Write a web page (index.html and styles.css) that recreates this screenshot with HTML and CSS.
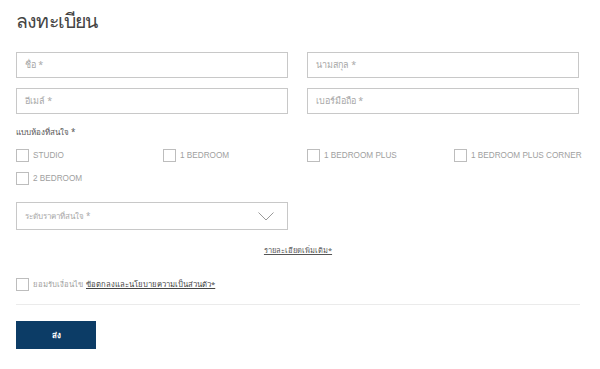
FILE: index.html
```html
<!DOCTYPE html>
<html lang="th">
<head>
<meta charset="utf-8">
<link rel="stylesheet" href="styles.css">
</head>
<body>
<div class="page">
  <h1 class="title">ลงทะเบียน</h1>
  <div class="grid2">
    <div class="field">ชื่อ *</div>
    <div class="field">นามสกุล *</div>
    <div class="field">อีเมล์ *</div>
    <div class="field">เบอร์มือถือ *</div>
  </div>
  <div class="label">แบบห้องที่สนใจ *</div>
  <div class="rooms">
    <div class="opt"><span class="box"></span>STUDIO</div>
    <div class="opt"><span class="box"></span>1 BEDROOM</div>
    <div class="opt"><span class="box"></span>1 BEDROOM PLUS</div>
    <div class="opt"><span class="box"></span>1 BEDROOM PLUS CORNER</div>
    <div class="opt"><span class="box"></span>2 BEDROOM</div>
  </div>
  <div class="select">
    <span>ระดับราคาที่สนใจ *</span>
    <svg class="chev" width="16" height="9" viewBox="0 0 16 9"><path d="M0.5 0.5 L8 8 L15.5 0.5" fill="none" stroke="#9a9a9a" stroke-width="1"/></svg>
  </div>
  <div class="more"><a href="#">รายละเอียดเพิ่มเติม*</a></div>
  <div class="consent"><span class="box"></span>ยอมรับเงื่อนไข&nbsp;<a href="#">ข้อตกลงและนโยบายความเป็นส่วนตัว*</a></div>
  <hr class="divider">
  <button class="submit">ส่ง</button>
</div>
</body>
</html>
```
FILE: styles.css
```css
html, body { margin: 0; padding: 0; background: #fff; }
body { font-family: "Noto Sans", "Liberation Sans", sans-serif; color: #999; }
.page { width: 564px; padding: 0 0 0 16px; }
.title {
  margin: 0; padding-top: 6px; height: 46px;
  font-size: 19.5px; font-weight: 400; color: #444; line-height: 30px; letter-spacing: -0.8px;
}
.grid2 {
  display: grid; grid-template-columns: 272px 272px; column-gap: 19px; row-gap: 10px;
}
.field {
  height: 26px; box-sizing: border-box; border: 1px solid #c8c8c8;
  font-size: 9px; line-height: 24px; padding-left: 8px; color: #a8a8a8;
}
.label { margin-top: 12px; font-size: 8px; line-height: 12px; color: #555; }
.rooms {
  margin-top: 11px; display: grid;
  grid-template-columns: 147px 144px 147px 1fr; row-gap: 10px;
}
.opt {
  display: flex; align-items: center; font-size: 8.2px; color: #a0a0a0;
  font-family: "Liberation Sans", sans-serif; height: 13px; white-space: nowrap;
}
.box {
  width: 13px; height: 13px; box-sizing: border-box; border: 1px solid #bdbdbd;
  margin-right: 4px; flex: none; display: inline-block;
}
.select {
  margin-top: 17px; width: 272px; height: 28px; box-sizing: border-box;
  border: 1px solid #c8c8c8; display: flex; align-items: center;
  justify-content: space-between; padding: 0 13px 0 8px; font-size: 8px; color: #a8a8a8;
}
.chev { margin-top: 1px; }
.more { margin-top: 13px; text-align: center; font-size: 7.5px; line-height: 14px; }
.more a { color: #555; text-decoration: underline; }
.consent {
  margin-top: 20px; display: flex; align-items: center; height: 14px;
  font-size: 7.7px; color: #a0a0a0;
}
.consent .box { margin-right: 4px; }
.consent a { color: #444; text-decoration: underline; margin-left: 1px; }
.divider { margin: 13px 0 0; border: 0; border-top: 1px solid #ebebeb; height: 0; }
.submit {
  margin-top: 16px; width: 80px; height: 28px; border: 0; background: #0c3c66;
  color: #fff; font-size: 8px; font-weight: 700; font-family: "Noto Sans", sans-serif;
  display: block; padding: 0;
}
```
